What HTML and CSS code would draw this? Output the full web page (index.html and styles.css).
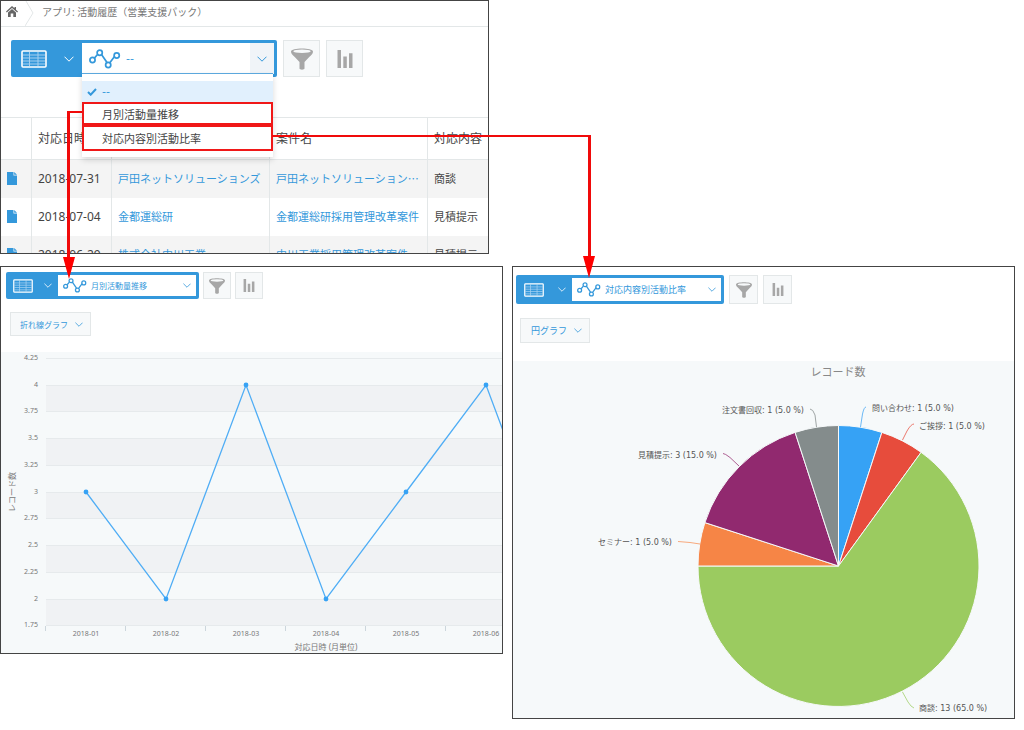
FILE: index.html
```html
<!DOCTYPE html>
<html lang="ja">
<head>
    <meta charset="UTF-8">
    <title>活動履歴（営業支援パック）</title>
    <link rel="stylesheet" href="styles.css">
</head>
<body>
    <!-- 共通アイコン -->
    <svg class="defs" width="0" height="0" aria-hidden="true">
        <symbol id="i-table" viewBox="0 0 26 18">
            <path d="M2 5h22M2 8h22M2 11h22M2 14h22M8.500 2v14M17 2v14" stroke="#a4d0f0" stroke-width="1"/>
            <rect x="1" y="1" width="24" height="16" rx="1" fill="none" stroke="#fff" stroke-width="1.600"/>
        </symbol>
        <symbol id="i-down" viewBox="0 0 10 6">
            <path d="M.5.7 5 5.200 9.500.7" fill="none" stroke="currentColor" stroke-width="1"/>
        </symbol>
        <symbol id="i-graph" viewBox="0 0 32 20">
            <g fill="none" stroke="#3498db" stroke-width="1.700">
                <path d="M5.500 9 8.500 5.500M12.500 5.500l5.500 8M21 13.500l4.500-6"/>
                <circle cx="3.500" cy="11" r="2.600"/>
                <circle cx="10.700" cy="3.700" r="2.600"/>
                <circle cx="19.200" cy="16" r="2.600"/>
                <circle cx="27.700" cy="6.500" r="2.600"/>
            </g>
        </symbol>
        <symbol id="i-filter" viewBox="0 0 22 22">
            <path d="M0 3.500C0-.5 22-.5 22 3.500c0 2-1.500 3.500-3.500 5.200L13.500 14v6.500c0 1.500-5 1.500-5 0V14L3.500 8.700C1.500 7 0 5.500 0 3.500z" fill="#a7a7a7"/>
            <ellipse cx="11" cy="3.300" rx="8.700" ry="1.700" fill="#f7f9fa"/>
        </symbol>
        <symbol id="i-bars" viewBox="0 0 16 18">
            <path d="M.5 0h3.500v18H.5zM6.300 6.500h3.500V18H6.300zM12 3.300h3.500V18H12z" fill="#a7a7a7"/>
        </symbol>
        <symbol id="i-file" viewBox="0 0 10 13">
            <path d="M0 0h6.500v3.500H10V13H0z" fill="#3498db"/>
            <path d="M7.200 0L10 2.800H7.200z" fill="#3498db"/>
        </symbol>
    </svg>

    <div class="board">
        <!-- 一覧 -->
        <section class="panel list">
            <nav class="crumb">
                <a href="#" class="home" aria-label="ホーム">
                    <svg width="12" height="11" viewBox="0 0 12 11"><path d="M6 0l2.500 2.300V1H10v2.700L12 5.600l-.8.900L6 1.900.8 6.500 0 5.600zM6 3l4 3.500V11H7.300V7.500H4.700V11H2V6.500z" fill="#666"/></svg>
                </a>
                <svg class="sep" width="9" height="25" viewBox="0 0 9 25"><path d="M1 0l7 12L0 25" fill="none" stroke="#e3e7e8"/></svg>
                <span>アプリ: 活動履歴（営業支援パック）</span>
            </nav>
            <div class="toolbar large">
                <div class="switch">
                    <button type="button" class="view" aria-label="表示形式">
                        <svg class="i-table"><use href="#i-table"/></svg>
                        <svg class="i-down"><use href="#i-down"/></svg>
                    </button>
                    <label class="picker">
                        <svg class="i-graph"><use href="#i-graph"/></svg>
                        <select aria-label="グラフ"><option>--</option><option>月別活動量推移</option><option>対応内容別活動比率</option></select>
                        <span class="arrow"><svg class="i-down"><use href="#i-down"/></svg></span>
                    </label>
                    <ul class="menu">
                        <li class="selected"><button type="button">
                            <svg width="10" height="8" viewBox="0 0 10 8"><path d="M1 4l2.700 2.700L9 1" fill="none" stroke="#3498db" stroke-width="2"/></svg>--</button></li>
                        <li class="marked"><button type="button">月別活動量推移</button></li>
                        <li class="marked last"><button type="button">対応内容別活動比率</button></li>
                    </ul>
                </div>
                <button type="button" class="tool" aria-label="絞り込み"><svg class="i-filter"><use href="#i-filter"/></svg></button>
                <button type="button" class="tool" aria-label="集計"><svg class="i-bars"><use href="#i-bars"/></svg></button>
            </div>
            <table class="records">
                <colgroup>
                    <col class="c-icon"><col class="c-date"><col class="c-name"><col class="c-name"><col>
                </colgroup>
                <thead>
                    <tr><th></th><th>対応日時</th><th></th><th>案件名</th><th>対応内容</th></tr>
                </thead>
                <tbody>
                    <tr>
                        <td><a href="#" aria-label="詳細"><svg class="i-file"><use href="#i-file"/></svg></a></td>
                        <td class="date">2018-07-31</td>
                        <td><a href="#">戸田ネットソリューションズ</a></td>
                        <td><a href="#">戸田ネットソリューション…</a></td>
                        <td>商談</td>
                    </tr>
                    <tr>
                        <td><a href="#" aria-label="詳細"><svg class="i-file"><use href="#i-file"/></svg></a></td>
                        <td class="date">2018-07-04</td>
                        <td><a href="#">金都運総研</a></td>
                        <td><a href="#">金都運総研採用管理改革案件</a></td>
                        <td>見積提示</td>
                    </tr>
                    <tr>
                        <td><a href="#" aria-label="詳細"><svg class="i-file"><use href="#i-file"/></svg></a></td>
                        <td class="date">2018-06-29</td>
                        <td><a href="#">株式会社中川工業</a></td>
                        <td><a href="#">中川工業採用管理改革案件</a></td>
                        <td>見積提示</td>
                    </tr>
                </tbody>
            </table>
        </section>

        <!-- 折れ線グラフ -->
        <section class="panel line">
            <div class="toolbar small">
                <div class="switch">
                    <button type="button" class="view" aria-label="表示形式">
                        <svg class="i-table"><use href="#i-table"/></svg>
                        <svg class="i-down"><use href="#i-down"/></svg>
                    </button>
                    <label class="picker">
                        <svg class="i-graph"><use href="#i-graph"/></svg>
                        <select aria-label="グラフ"><option>月別活動量推移</option></select>
                        <span class="arrow"><svg class="i-down"><use href="#i-down"/></svg></span>
                    </label>
                </div>
                <button type="button" class="tool" aria-label="絞り込み"><svg class="i-filter"><use href="#i-filter"/></svg></button>
                <button type="button" class="tool" aria-label="集計"><svg class="i-bars"><use href="#i-bars"/></svg></button>
            </div>
            <label class="type">
                <select aria-label="グラフの種類"><option>折れ線グラフ</option></select>
                <svg class="i-down"><use href="#i-down"/></svg>
            </label>
            <svg class="chart" viewBox="0 0 501 301">
                <g fill="#f0f2f4">
                    <rect x="45" y="33" width="456" height="27"/>
                    <rect x="45" y="86" width="456" height="27"/>
                    <rect x="45" y="140" width="456" height="27"/>
                    <rect x="45" y="193" width="456" height="27"/>
                    <rect x="45" y="247" width="456" height="27"/>
                </g>
                <path d="M45 6.500h456M45 33.500h456M45 59.500h456M45 86.500h456M45 113.500h456M45 140.500h456M45 166.500h456M45 193.500h456M45 220.500h456M45 247.500h456M45 273.500h456" stroke="#e6eaec"/>
                <path d="M44.500 274v5M124.500 274v5M204.500 274v5M284.500 274v5M364.500 274v5M444.500 274v5" stroke="#ccd6dc"/>
                <g class="axis" text-anchor="end">
                    <text x="37" y="8">4.25</text>
                    <text x="37" y="35">4</text>
                    <text x="37" y="61">3.75</text>
                    <text x="37" y="88">3.5</text>
                    <text x="37" y="115">3.25</text>
                    <text x="37" y="142">3</text>
                    <text x="37" y="168">2.75</text>
                    <text x="37" y="195">2.5</text>
                    <text x="37" y="222">2.25</text>
                    <text x="37" y="249">2</text>
                    <text x="37" y="275">1.75</text>
                </g>
                <g class="axis" text-anchor="middle">
                    <text x="85" y="284">2018-01</text>
                    <text x="165" y="284">2018-02</text>
                    <text x="245" y="284">2018-03</text>
                    <text x="325" y="284">2018-04</text>
                    <text x="405" y="284">2018-05</text>
                    <text x="485" y="284">2018-06</text>
                </g>
                <g class="axis-title" text-anchor="middle">
                    <text x="325" y="298">対応日時 (月単位)</text>
                    <text transform="translate(14 140) rotate(-90)">レコード数</text>
                </g>
                <path d="M85 140l80 107 80-214 80 214 80-107 80-107 80 214" fill="none" stroke="#4fadf5" stroke-width="1.300"/>
                <g fill="#36a2f5">
                    <circle cx="85" cy="140" r="2.400"/>
                    <circle cx="165" cy="247" r="2.400"/>
                    <circle cx="245" cy="33" r="2.400"/>
                    <circle cx="325" cy="247" r="2.400"/>
                    <circle cx="405" cy="140" r="2.400"/>
                    <circle cx="485" cy="33" r="2.400"/>
                </g>
            </svg>
        </section>

        <!-- 円グラフ -->
        <section class="panel pie">
            <div class="toolbar medium">
                <div class="switch">
                    <button type="button" class="view" aria-label="表示形式">
                        <svg class="i-table"><use href="#i-table"/></svg>
                        <svg class="i-down"><use href="#i-down"/></svg>
                    </button>
                    <label class="picker">
                        <svg class="i-graph"><use href="#i-graph"/></svg>
                        <select aria-label="グラフ"><option>対応内容別活動比率</option></select>
                        <span class="arrow"><svg class="i-down"><use href="#i-down"/></svg></span>
                    </label>
                </div>
                <button type="button" class="tool" aria-label="絞り込み"><svg class="i-filter"><use href="#i-filter"/></svg></button>
                <button type="button" class="tool" aria-label="集計"><svg class="i-bars"><use href="#i-bars"/></svg></button>
            </div>
            <label class="type">
                <select aria-label="グラフの種類"><option>円グラフ</option></select>
                <svg class="i-down"><use href="#i-down"/></svg>
            </label>
            <svg class="chart" viewBox="0 0 501 357">
                <text class="chart-title" x="325" y="15" text-anchor="middle">レコード数</text>
                <g stroke="#f6f9fa" stroke-width="1" stroke-linejoin="round">
                    <path d="M325.500 205V64.500A140.500 140.500 0 0 1 368.900 71.400z" fill="#36a2f5"/>
                    <path d="M325.500 205L368.900 71.400A140.500 140.500 0 0 1 408.100 91.300z" fill="#e74c3c"/>
                    <path d="M325.500 205L408.100 91.300A140.500 140.500 0 1 1 185 205z" fill="#9bcb60"/>
                    <path d="M325.500 205H185A140.500 140.500 0 0 1 191.900 161.600z" fill="#f68546"/>
                    <path d="M325.500 205L191.900 161.600A140.500 140.500 0 0 1 282.100 71.400z" fill="#91296f"/>
                    <path d="M325.500 205L282.100 71.400A140.500 140.500 0 0 1 325.500 64.500z" fill="#848c8c"/>
                </g>
                <g fill="none" stroke-width="1">
                    <path d="M347.500 66L349.500 53Q351 46 353 46" stroke="#6cb9f6"/>
                    <path d="M389.500 79L394 70Q398 63 401 63" stroke="#ec7a6e"/>
                    <path d="M389.500 331L395 341Q398 346 401 347" stroke="#b4d98a"/>
                    <path d="M187 183L177 181.500Q171 181 165 180.500" stroke="#f8aa7e"/>
                    <path d="M226 105L217 96.500Q212 92.500 210 92.500" stroke="#ae6093"/>
                    <path d="M303.500 66L302 54Q300 48 297 48" stroke="#a0a6a6"/>
                </g>
                <g class="slice">
                    <text x="359" y="50">問い合わせ: 1 (5.0 %)</text>
                    <text x="406" y="68">ご挨拶: 1 (5.0 %)</text>
                    <text x="406" y="350">商談: 13 (65.0 %)</text>
                </g>
                <g class="slice" text-anchor="end">
                    <text x="159" y="184">セミナー: 1 (5.0 %)</text>
                    <text x="204" y="97">見積提示: 3 (15.0 %)</text>
                    <text x="291" y="52">注文書回収: 1 (5.0 %)</text>
                </g>
            </svg>
        </section>

        <!-- メニューから各グラフへの矢印 -->
        <div class="link to-line"></div>
        <div class="link to-pie"></div>
    </div>
</body>
</html>
```

FILE: styles.css
```css
* {
    box-sizing: border-box;
    margin: 0;
    padding: 0;
}
body {
    background: #fff;
    color: #444;
    font-family: "Noto Sans", "Noto Sans CJK JP", sans-serif;
    font-size: 11px;
}
ul {
    list-style: none;
}
a {
    color: #3498db;
    text-decoration: none;
}
svg {
    display: block;
    flex: none;
}
button,
select {
    border: 0;
    background: none;
    color: inherit;
    font: inherit;
}
select {
    appearance: none;
    flex: 1;
    min-width: 0;
    color: #3498db;
}
.defs {
    position: absolute;
}

.board {
    position: relative;
    display: grid;
    grid-template-columns: 1fr 1fr;
    align-items: start;
    gap: 12px 9px;
    padding-right: 9px;
}
.panel {
    border: 1px solid #444;
    overflow: hidden;
}
.list {
    grid-column: 1 / 3;
    width: 489px;
    height: 254px;
}

/* パンくず */
.crumb {
    display: flex;
    align-items: center;
    height: 26px;
    padding-left: 5px;
    border-bottom: 1px solid #e3e7e8;
    color: #777;
    font-size: 10px;
}
.crumb span {
    padding: 0 0 5px 8px;
}
.home {
    padding-bottom: 4px;
}
.sep {
    margin-left: 7px;
}

/* ツールバー */
.toolbar {
    display: flex;
}
.switch {
    position: relative;
    display: flex;
    padding: 3px 3px 3px 0;
    background: #3498db;
    border-radius: 2px;
}
.view {
    display: flex;
    align-items: center;
    justify-content: space-between;
    color: #fff;
}
.picker {
    display: flex;
    flex: 1;
    align-items: center;
    min-width: 0;
    background: #fff;
    color: #3498db;
}
.arrow {
    display: flex;
    align-items: center;
    justify-content: center;
    align-self: stretch;
}
.tool {
    display: flex;
    align-items: center;
    justify-content: center;
    background: #f7f9fa;
    border: 1px solid #e3e7e8;
}
.i-down {
    width: 8px;
    height: 5px;
}
.i-graph {
    width: 24px;
    height: 15px;
}
.i-table {
    width: 20px;
    height: 14px;
}
.i-filter {
    width: 16px;
    height: 16px;
}
.i-bars {
    width: 12px;
    height: 13px;
}
.i-file {
    width: 10px;
    height: 13px;
}

.large {
    gap: 6px;
    padding: 13px 10px 0;
}
.large .switch {
    width: 266px;
    height: 37px;
}
.large .view {
    width: 71px;
    padding: 0 8px 0 10px;
}
.large .tool {
    width: 37px;
    height: 37px;
}
.large .picker {
    padding-left: 7px;
}
.large .picker select {
    padding-left: 5px;
    font-family: "DejaVu Sans", "Noto Sans CJK JP", sans-serif;
}
.large .arrow {
    width: 24px;
    background: #f0f4f8;
}
.large .i-down {
    width: 10px;
    height: 6px;
}
.large .i-graph {
    width: 32px;
    height: 20px;
}
.large .i-table {
    width: 26px;
    height: 18px;
}
.large .i-filter {
    width: 22px;
    height: 22px;
}
.large .i-bars {
    width: 16px;
    height: 18px;
}

.small {
    gap: 4px;
    padding: 5px 5px 0;
    font-size: 8px;
}
.small .switch {
    width: 193px;
    height: 27px;
}
.small .view {
    width: 52px;
    padding: 0 6px 0 7px;
}
.small .tool {
    width: 28px;
    height: 27px;
}
.medium {
    gap: 5px;
    padding: 8px 3px 0;
    font-size: 9px;
}
.medium .switch {
    width: 208px;
    height: 29px;
}
.medium .view {
    width: 56px;
    padding: 0 6px 0 8px;
}
.medium .tool {
    width: 29px;
    height: 29px;
}
.small .picker,
.medium .picker {
    padding: 0 5px;
}
.small .picker select,
.medium .picker select {
    padding-left: 4px;
}

/* プルダウン */
.menu {
    position: absolute;
    z-index: 1;
    top: 33px;
    left: 71px;
    right: 4px;
    padding: 7px 0 6px;
    background: #fff;
    border-top: 1px solid #5ba8dd;
    box-shadow: 0 3px 6px rgba(0, 0, 0, .15);
}
.menu button {
    display: flex;
    align-items: center;
    gap: 5px;
    width: 100%;
    height: 100%;
    padding-left: 18px;
    text-align: left;
}
.menu .selected {
    height: 21px;
    background: #e1f0fd;
    color: #3498db;
    font-family: "DejaVu Sans", "Noto Sans CJK JP", sans-serif;
}
.menu .selected button {
    padding-left: 5px;
}
.menu .marked {
    height: 23px;
    border: 2px solid #f01818;
}
.menu .last {
    height: 26px;
}

/* 一覧テーブル */
.records {
    width: 100%;
    margin-top: 40px;
    border-collapse: separate;
    border-spacing: 0;
    border-top: 1px solid #e3e7e8;
    table-layout: fixed;
    font-family: "Noto Sans CJK JP", sans-serif;
}
.c-icon {
    width: 30px;
}
.c-date {
    width: 80px;
}
.c-name {
    width: 158px;
}
.records th,
.records td {
    height: 38px;
    padding: 0 0 2px 6px;
    border-left: 1px solid #e3e7e8;
    text-align: left;
    white-space: nowrap;
}
.records th {
    height: 42px;
    border-bottom: 1px solid #e3e7e8;
    font-size: 12px;
    font-weight: normal;
}
.records th:first-child,
.records td:first-child {
    border-left: 0;
}
.records tbody tr:nth-child(odd) {
    background: #f4f4f4;
}
.records .date {
    font-family: "Noto Sans", sans-serif;
    font-size: 12px;
}

/* グラフ */
.type {
    display: inline-flex;
    align-items: center;
    padding-right: 7px;
    background: #f7f9fa;
    border: 1px solid #e3e7e8;
    color: #3498db;
    vertical-align: top;
}
.line .type {
    width: 81px;
    height: 24px;
    margin: 13px 0 16px 9px;
    padding-left: 9px;
    font-size: 8px;
}
.pie .type {
    width: 70px;
    height: 25px;
    margin: 14px 0 18px 7px;
    padding-left: 10px;
    font-size: 9px;
}
.chart {
    width: 100%;
    height: auto;
    background: #f6f9fa;
}
.axis {
    fill: #777;
    font-size: 7px;
}
.axis-title {
    fill: #777;
    font-size: 8px;
}
.chart-title {
    fill: #888;
    font-size: 11px;
}
.slice {
    fill: #555;
    font-family: "DejaVu Sans", "Noto Sans CJK JP", sans-serif;
    font-size: 8px;
}

/* 矢印 */
.link {
    position: absolute;
    z-index: 2;
    border-top: 2px solid #f00a0a;
    pointer-events: none;
}
.link::after {
    content: "";
    position: absolute;
    top: 100%;
    border: 6px solid transparent;
    border-top: 22px solid #f00;
    border-bottom: 0;
}
.to-line {
    top: 111px;
    left: 67px;
    width: 15px;
    height: 146px;
    border-left: 3px solid #f00a0a;
}
.to-line::after {
    left: -7px;
}
.to-pie {
    top: 135px;
    left: 272px;
    right: calc(50% - 79px);
    height: 121px;
    border-right: 3px solid #f00a0a;
}
.to-pie::after {
    right: -7px;
}
```
